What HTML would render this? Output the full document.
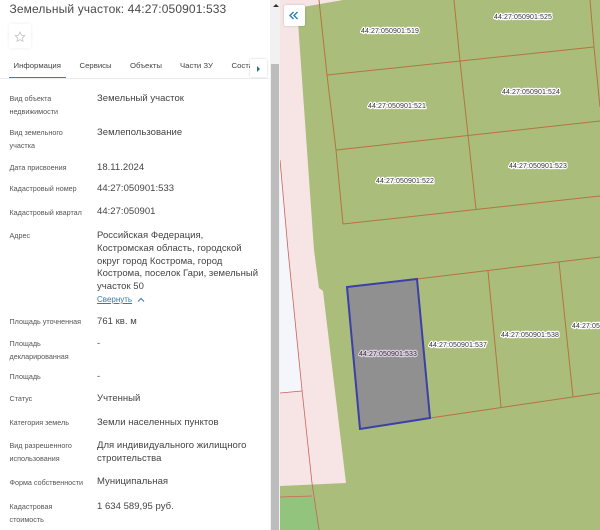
<!DOCTYPE html>
<html lang="ru"><head><meta charset="utf-8"><title>Земельный участок</title>
<style>
html,body{margin:0;padding:0;background:#fff}
body{width:600px;height:530px;position:relative;overflow:hidden;font-family:"Liberation Sans","DejaVu Sans",sans-serif;color:#444}
#w{position:absolute;left:0;top:0;width:600px;height:530px;overflow:hidden;filter:blur(.3px)}
.t{position:absolute;white-space:nowrap}
.l{font-size:7.2px;color:#555;line-height:13px}
.v{font-size:9.5px;color:#444;line-height:12.75px;letter-spacing:.03px}
.tab{font-size:7.75px;color:#444;top:61px}
svg text{font-family:"Liberation Sans","DejaVu Sans",sans-serif}
</style></head><body><div id="w">
<svg style="position:absolute;left:280px;top:0" width="320" height="530" viewBox="280 0 320 530">
<rect x="280" y="0" width="320" height="530" fill="#f7e5e5"/>
<polygon points="280,160 288,250 302,390 280,393" fill="#f4f6fb"/>
<polygon points="297,8 343,0 600,0 600,530 280,530 280,486 346,483 323,291 319,288 314,250" fill="#abbd7a"/>
<polygon points="280,498 315,497 320,530 280,530" fill="#93c47d"/>
<g stroke="#b5703f" stroke-width="1" fill="none" opacity=".95">
<path d="M319,0 L327,75 L336,150 L343,224"/>
<path d="M454,0 L460,61 L468,135 L476,209"/>
<path d="M590,0 L594,47 L600,107"/>
<path d="M327,75 L594,47"/>
<path d="M336,150 L600,121"/>
<path d="M343,224 L600,196"/>
<path d="M417,279 L600,257"/>
<path d="M430,418 L600,393"/>
<path d="M488,271 L501,407"/>
<path d="M559,262 L573,397"/>
</g>
<g stroke="#c9635a" stroke-width=".8" fill="none">
<path d="M280,160 L288,250 L302,390 L312,483 L319,530"/>
<path d="M280,393 L302,391"/>
<path d="M280,497 L312,496"/>
</g>
<polygon points="347,287 417,279 430,418 360,429" fill="#909090" stroke="#3c3fa8" stroke-width="2"/>
<g font-size="7" text-anchor="middle" fill="#333" stroke="#fff" stroke-width="2.4" stroke-linejoin="round" paint-order="stroke" letter-spacing=".1">
<text x="390" y="33">44:27:050901:519</text>
<text x="523" y="19">44:27:050901:525</text>
<text x="397" y="108">44:27:050901:521</text>
<text x="531" y="94">44:27:050901:524</text>
<text x="405" y="183">44:27:050901:522</text>
<text x="538" y="168">44:27:050901:523</text>
<text x="388" y="356" stroke="#d9d0dc" fill="#3a2a3a">44:27:050901:533</text>
<text x="458" y="347">44:27:050901:537</text>
<text x="530" y="337">44:27:050901:538</text>
<text x="572" y="328" text-anchor="start">44:27:050901:539</text>
</g>
</svg>

<div style="position:absolute;left:270px;top:0;width:9.5px;height:530px;background:#f1f1f1"></div>
<div style="position:absolute;left:271px;top:64px;width:8px;height:466px;background:#bcbcbc"></div>
<div style="position:absolute;left:272.5px;top:4px;width:0;height:0;border:3px solid transparent;border-top:0;border-bottom:3.5px solid #333"></div>

<div style="position:absolute;left:284px;top:5px;width:21px;height:21px;background:#fff;border-radius:2px;box-shadow:0 0 2px rgba(0,0,0,.2)">
<svg width="21" height="21" viewBox="0 0 21 21"><path d="M9.5,7 L6,10.5 L9.5,14 M13.5,7 L10,10.5 L13.5,14" fill="none" stroke="#2b7cb0" stroke-width="1.4"/></svg></div>

<div class="t" style="left:9.5px;top:1px;font-size:12px;line-height:17px;color:#4a4a4a;letter-spacing:.12px">Земельный участок: 44:27:050901:533</div>

<div style="position:absolute;left:9px;top:24px;width:22px;height:24px;background:#fff;box-shadow:0 0 3px rgba(0,0,0,.08);border-radius:2px">
<svg width="22" height="24" viewBox="0 0 22 24"><path d="M11,8 L12.5,11.2 L15.8,11.6 L13.4,13.9 L14,17.2 L11,15.6 L8,17.2 L8.6,13.9 L6.2,11.6 L9.5,11.2 Z" fill="none" stroke="#c4c4c4" stroke-width=".8"/></svg></div>

<div class="t tab" style="left:13.5px">Информация</div>
<div class="t tab" style="left:79.5px">Сервисы</div>
<div class="t tab" style="left:130px">Объекты</div>
<div class="t tab" style="left:180px">Части ЗУ</div>
<div class="t tab" style="left:231.5px">Состав</div>
<div style="position:absolute;left:0;top:78px;width:270px;height:1px;background:#ececec"></div>
<div style="position:absolute;left:9px;top:77px;width:57px;height:1px;background:#4f7f95"></div>
<div style="position:absolute;left:250px;top:59px;width:17px;height:18px;background:#fff;box-shadow:0 0 2px rgba(0,0,0,.2);border-radius:2px">
<div style="position:absolute;left:7px;top:7px;width:0;height:0;border:3px solid transparent;border-right:0;border-left:3px solid #2b6c8f"></div></div>

<div class="t l" style="left:9.5px;top:92px">Вид объекта<br>недвижимости</div>
<div class="t v" style="left:97px;top:93px">Земельный участок</div>
<div class="t l" style="left:9.5px;top:126px">Вид земельного<br>участка</div>
<div class="t v" style="left:97px;top:127px">Землепользование</div>
<div class="t l" style="left:9.5px;top:161px">Дата присвоения</div>
<div class="t v" style="left:97px;top:161.5px">18.11.2024</div>
<div class="t l" style="left:9.5px;top:182px">Кадастровый номер</div>
<div class="t v" style="left:97px;top:183px">44:27:050901:533</div>
<div class="t l" style="left:9.5px;top:206px">Кадастровый квартал</div>
<div class="t v" style="left:97px;top:206px">44:27:050901</div>
<div class="t l" style="left:9.5px;top:229px">Адрес</div>
<div class="t v" style="left:97px;top:230px">Российская Федерация,<br>Костромская область, городской<br>округ город Кострома, город<br>Кострома, поселок Гари, земельный<br>участок 50</div>
<div class="t" style="left:97px;top:293px;font-size:8px;line-height:13px;color:#2e7cb5;text-decoration:underline">Свернуть</div>
<svg style="position:absolute;left:136px;top:296px" width="10" height="8" viewBox="0 0 10 8"><path d="M2,5.5 L5,2.5 L8,5.5" fill="none" stroke="#2e7cb5" stroke-width="1"/></svg>
<div class="t l" style="left:9.5px;top:315px">Площадь уточненная</div>
<div class="t v" style="left:97px;top:315.5px">761 кв. м</div>
<div class="t l" style="left:9.5px;top:337px">Площадь<br>декларированная</div>
<div class="t v" style="left:97px;top:338px">-</div>
<div class="t l" style="left:9.5px;top:370px">Площадь</div>
<div class="t v" style="left:97px;top:371px">-</div>
<div class="t l" style="left:9.5px;top:392px">Статус</div>
<div class="t v" style="left:97px;top:393px">Учтенный</div>
<div class="t l" style="left:9.5px;top:416px">Категория земель</div>
<div class="t v" style="left:97px;top:416.5px">Земли населенных пунктов</div>
<div class="t l" style="left:9.5px;top:439px">Вид разрешенного<br>использования</div>
<div class="t v" style="left:97px;top:440px">Для индивидуального жилищного<br>строительства</div>
<div class="t l" style="left:9.5px;top:476px">Форма собственности</div>
<div class="t v" style="left:97px;top:476px">Муниципальная</div>
<div class="t l" style="left:9.5px;top:500px">Кадастровая<br>стоимость</div>
<div class="t v" style="left:97px;top:501px">1 634 589,95 руб.</div>
</div></body></html>
